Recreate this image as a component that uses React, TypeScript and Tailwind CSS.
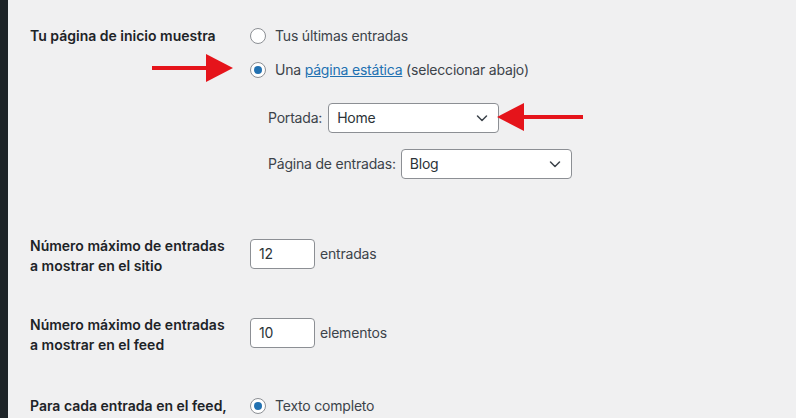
import React from "react";

const Radio = ({ checked }: { checked?: boolean }) => (
  <span className="flex h-4 w-4 shrink-0 items-center justify-center rounded-full border border-[#8c8f94] bg-white">
    {checked && <span className="h-2 w-2 rounded-full bg-[#2271b1]" />}
  </span>
);

const Chevron = () => (
  <svg className="h-4 w-4" viewBox="0 0 16 16" fill="none" aria-hidden="true">
    <path d="M3.5 6l4.5 4.5L12.5 6" stroke="#3c434a" strokeWidth="1.5" strokeLinecap="round" strokeLinejoin="round" />
  </svg>
);

const Select = ({ value }: { value: string }) => (
  <div className="flex h-[30px] w-[171px] items-center justify-between rounded-[4px] border border-[#8c8f94] bg-white pl-2 pr-[8px] text-[#2c3338]">
    <span>{value}</span>
    <Chevron />
  </div>
);

const NumberInput = ({ value }: { value: string }) => (
  <div className="flex h-[30px] w-[65px] items-center rounded-[4px] border border-[#8c8f94] bg-white pl-2 text-[#2c3338]">
    {value}
  </div>
);

const Row = ({ label, children, className }: { label: React.ReactNode; children: React.ReactNode; className?: string }) => (
  <div className={"flex " + (className ?? "")}>
    <div className="w-[220px] shrink-0 pr-[20px] font-semibold text-[#1d2327]">{label}</div>
    <div className="flex-1 tracking-[-0.2px]">{children}</div>
  </div>
);

const Arrow = ({ dir, className }: { dir: "right" | "left"; className: string }) => (
  <svg className={"absolute " + className} viewBox="0 0 88 30" width="88" height="30" aria-hidden="true">
    {dir === "right" ? (
      <>
        <rect x="0" y="12" width="58" height="4" fill="#e5141b" />
        <polygon points="54,0 81,14 54,28" fill="#e5141b" />
      </>
    ) : (
      <>
        <rect x="27" y="12" width="61" height="4" fill="#e5141b" />
        <polygon points="29,0 2,14 29,28" fill="#e5141b" />
      </>
    )}
  </svg>
);

export default function App() {
  return (
    <div
      className="relative flex h-[418px] w-[796px] overflow-hidden bg-[#f0f0f1] text-[14px] leading-[20px] text-[#3c434a]"
      style={{ fontFamily: "Inter, 'Liberation Sans', sans-serif" }}
    >
      <div className="w-[8px] shrink-0 bg-[#1d2327]" />
      <div className="flex-1 pl-[22px] pt-[26px]">
        <Row label="Tu página de inicio muestra">
          <div className="flex flex-col gap-[14px]">
            <label className="flex items-center gap-[9px]">
              <Radio />
              <span>Tus últimas entradas</span>
            </label>
            <label className="flex items-center gap-[9px]">
              <Radio checked />
              <span>
                Una <a className="text-[#2271b1] underline">página estática</a> (seleccionar abajo)
              </span>
            </label>
          </div>
          <div className="ml-[18px] mt-[23px] flex flex-col gap-[16px]">
            <div className="flex items-center gap-[6px]">
              <span>Portada:</span>
              <Select value="Home" />
            </div>
            <div className="flex items-center gap-[5px]">
              <span>Página de entradas:</span>
              <Select value="Blog" />
            </div>
          </div>
        </Row>

        <Row className="mt-[57px]" label={<>Número máximo de entradas<br />a mostrar en el sitio</>}>
          <div className="mt-[3px] flex items-center gap-[5px]">
            <NumberInput value="12" />
            <span>entradas</span>
          </div>
        </Row>

        <Row className="mt-[39px]" label={<>Número máximo de entradas<br />a mostrar en el feed</>}>
          <div className="mt-[3px] flex items-center gap-[5px]">
            <NumberInput value="10" />
            <span>elementos</span>
          </div>
        </Row>

        <Row className="mt-[41px]" label={<>Para cada entrada en el feed,<br />incluir</>}>
          <label className="flex items-center gap-[9px]">
            <Radio checked />
            <span>Texto completo</span>
          </label>
        </Row>
      </div>

      <Arrow dir="right" className="left-[152px] top-[54px]" />
      <Arrow dir="left" className="left-[495px] top-[103px]" />
    </div>
  );
}
